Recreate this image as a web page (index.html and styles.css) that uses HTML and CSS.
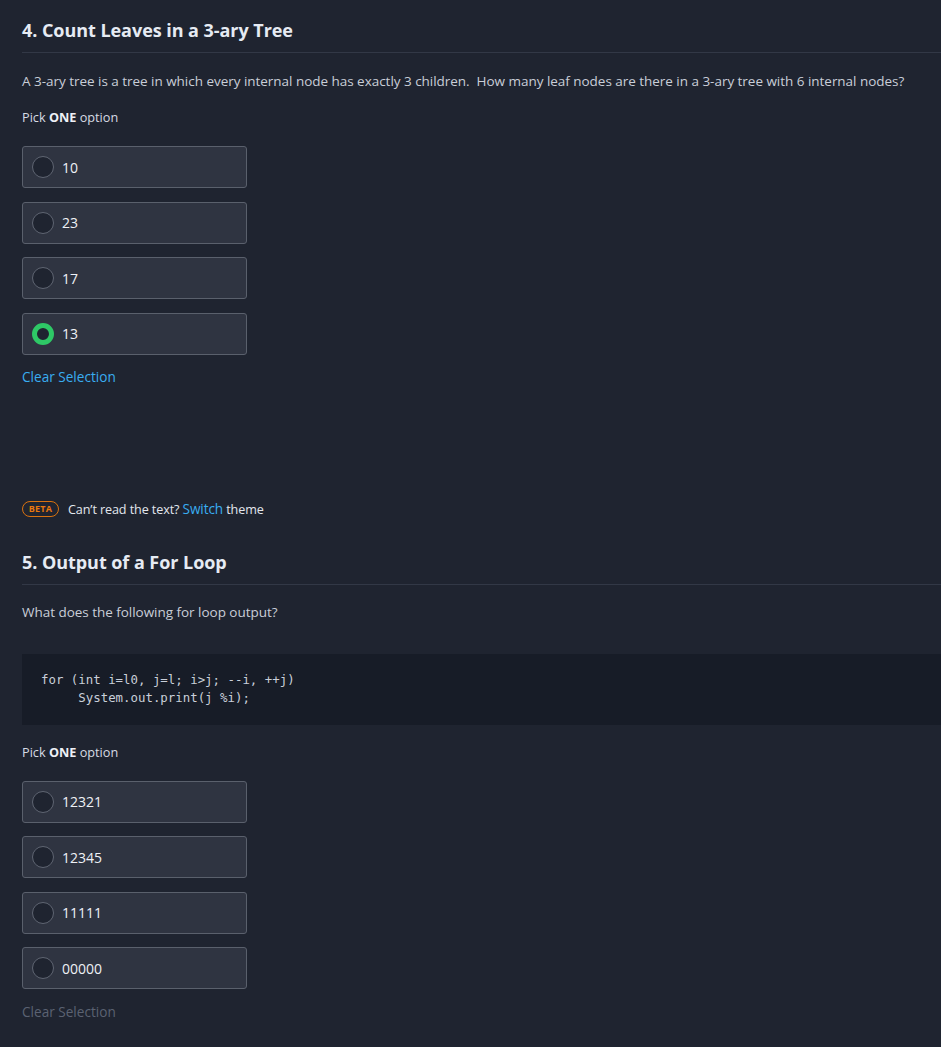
FILE: index.html
```html
<!DOCTYPE html>
<html>
<head>
<meta charset="utf-8">
<link rel="stylesheet" href="styles.css">
</head>
<body>
<div class="page">
  <section class="question q-first">
    <h2 class="q-title">4. Count Leaves in a 3-ary Tree</h2>
    <p class="q-text">A 3-ary tree is a tree in which every internal node has exactly 3 children.&nbsp; How many leaf nodes are there in a 3-ary tree with 6 internal nodes?</p>
    <p class="pick">Pick <b>ONE</b> option</p>
    <div class="options">
      <div class="option"><span class="radio"></span><span class="opt-label">10</span></div>
      <div class="option"><span class="radio"></span><span class="opt-label">23</span></div>
      <div class="option"><span class="radio"></span><span class="opt-label">17</span></div>
      <div class="option"><span class="radio checked"></span><span class="opt-label">13</span></div>
    </div>
    <a class="clear">Clear Selection</a>
  </section>

  <div class="beta-row">
    <span class="beta">BETA</span>
    <span class="beta-text">Can’t read the text? <a class="switch">Switch</a> theme</span>
  </div>

  <section class="question q-second">
    <h2 class="q-title">5. Output of a For Loop</h2>
    <p class="q-text q-text2">What does the following for loop output?</p>
    <pre class="code">for (int i=l0, j=l; i&gt;j; --i, ++j)
     System.out.print(j %i);</pre>
    <p class="pick pick2">Pick <b>ONE</b> option</p>
    <div class="options">
      <div class="option"><span class="radio"></span><span class="opt-label">12321</span></div>
      <div class="option"><span class="radio"></span><span class="opt-label">12345</span></div>
      <div class="option"><span class="radio"></span><span class="opt-label">11111</span></div>
      <div class="option"><span class="radio"></span><span class="opt-label">00000</span></div>
    </div>
    <a class="clear disabled">Clear Selection</a>
  </section>
</div>
</body>
</html>
```

FILE: styles.css
```css
html, body {
  margin: 0;
  padding: 0;
  background: #1f2430;
}
body {
  font-family: "Open Sans", "Noto Sans", sans-serif;
  color: #d3d8e0;
  height: 1047px;
  overflow: hidden;
}
.page {
  padding-left: 22px;
}
.question {
  display: flex;
  flex-direction: column;
  align-items: flex-start;
}
.q-title {
  align-self: stretch;
  margin: 0;
  font-size: 18px;
  line-height: 24px;
  font-weight: 700;
  color: #e6ebf3;
  padding-bottom: 10px;
  border-bottom: 1px solid #323846;
  letter-spacing: -0.05px;
}
.q-first .q-title {
  margin-top: 18px;
}
.q-second .q-title {
  margin-top: 31px;
}
.q-text {
  margin: 18px 0 0;
  font-size: 13.5px;
  line-height: 20px;
  color: #c9ced8;
  letter-spacing: -0.03px;
}
.q-text2 {
  margin-top: 17px;
}
.pick {
  margin: 17px 0 0;
  font-size: 12.7px;
  line-height: 18px;
  color: #d6dbe3;
}
.pick b {
  font-weight: 700;
  color: #eef1f6;
}
.pick2 {
  margin-top: 18px;
}
.options {
  margin-top: 20px;
  display: flex;
  flex-direction: column;
  gap: 13.5px;
}
.option {
  box-sizing: border-box;
  width: 225px;
  height: 42px;
  border: 1px solid #5a606c;
  border-radius: 3px;
  background: #2f3441;
  display: flex;
  align-items: center;
  padding-left: 9px;
  gap: 8px;
}
.radio {
  box-sizing: border-box;
  width: 22px;
  height: 22px;
  border-radius: 50%;
  border: 1.5px solid #5f6572;
  background: #1f2430;
}
.radio.checked {
  border: 5px solid #2ec866;
  background: #1f2430;
}
.opt-label {
  font-size: 14px;
  color: #eef1f6;
}
.clear {
  margin-top: 12px;
  font-size: 13.6px;
  line-height: 20px;
  color: #39adf0;
  cursor: pointer;
}
.clear.disabled {
  margin-top: 13px;
  color: #5b6272;
}
.beta-row {
  margin-top: 112px;
  display: flex;
  align-items: center;
  height: 20px;
  gap: 9px;
}
.beta {
  box-sizing: border-box;
  height: 16px;
  width: 37px;
  border: 1px solid #d9720f;
  border-radius: 8px;
  color: #e8780e;
  font-size: 9px;
  font-weight: 700;
  display: flex;
  align-items: center;
  justify-content: center;
  letter-spacing: 0.2px;
}
.beta-text {
  font-size: 12.6px;
  color: #e3e7ee;
  letter-spacing: -0.1px;
}
.switch {
  color: #39adf0;
  font-size: 13.6px;
}
.code {
  align-self: stretch;
  margin: 32px 0 0;
  background: #171c27;
  padding: 17px 0 18px 19px;
  font-family: "DejaVu Sans Mono", monospace;
  font-size: 12.4px;
  line-height: 18px;
  color: #c9cfd9;
}
```
